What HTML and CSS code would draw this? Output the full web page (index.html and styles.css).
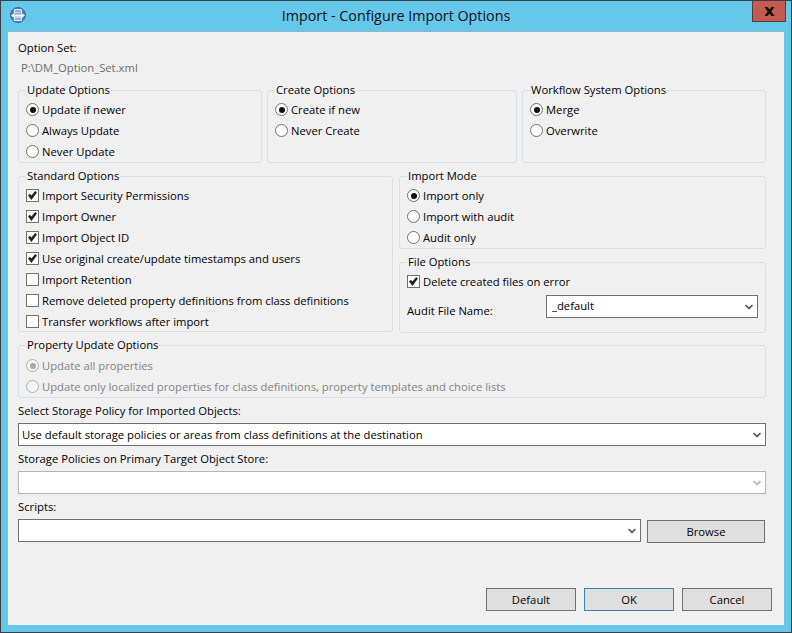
FILE: index.html
```html
<!DOCTYPE html>
<html lang="en">
<head>
<meta charset="utf-8">
<title>Import - Configure Import Options</title>
<link rel="stylesheet" href="styles.css">
</head>
<body>
<div class="window">
  <header class="titlebar">
    <svg class="app-icon" width="16" height="16" viewBox="0 0 16 16">
      <circle cx="8" cy="8" r="7.5" fill="#4d80bd" stroke="#3a6aa6"/>
      <path d="M4.5 2.5h7v3.5h-7zM4.5 10h7v3.5h-7z" fill="#8fb2da" stroke="#e6eef7"/>
      <path d="M1 8.5l3.5-2.5v1.5h7V6l3.5 2.5-3.5 2.5V9.5h-7V11z" fill="#fff"/>
    </svg>
    <h1 class="title">Import - Configure Import Options</h1>
    <button class="close"><svg width="11" height="9" viewBox="0 0 11 9"><path d="M.5 0h3l2 2.4 2-2.4h3L7.2 4.5 10.5 9h-3l-2-2.4-2 2.4h-3l3.3-4.5z" fill="#111"/></svg></button>
  </header>
  <main class="content">
    <div class="label">Option Set:</div>
    <div class="path">P:\DM_Option_Set.xml</div>

    <div class="row top">
      <fieldset class="group g-update">
        <legend>Update Options</legend>
        <label class="opt"><input type="radio" name="u" checked><span>Update if newer</span></label>
        <label class="opt"><input type="radio" name="u"><span>Always Update</span></label>
        <label class="opt"><input type="radio" name="u"><span>Never Update</span></label>
      </fieldset>
      <fieldset class="group g-create">
        <legend>Create Options</legend>
        <label class="opt"><input type="radio" name="c" checked><span>Create if new</span></label>
        <label class="opt"><input type="radio" name="c"><span>Never Create</span></label>
      </fieldset>
      <fieldset class="group g-workflow">
        <legend>Workflow System Options</legend>
        <label class="opt"><input type="radio" name="w" checked><span>Merge</span></label>
        <label class="opt"><input type="radio" name="w"><span>Overwrite</span></label>
      </fieldset>
    </div>

    <div class="row middle">
      <fieldset class="group g-standard">
        <legend>Standard Options</legend>
        <label class="opt"><input type="checkbox" checked><span>Import Security Permissions</span></label>
        <label class="opt"><input type="checkbox" checked><span>Import Owner</span></label>
        <label class="opt"><input type="checkbox" checked><span>Import Object ID</span></label>
        <label class="opt"><input type="checkbox" checked><span>Use original create/update timestamps and users</span></label>
        <label class="opt"><input type="checkbox"><span>Import Retention</span></label>
        <label class="opt"><input type="checkbox"><span>Remove deleted property definitions from class definitions</span></label>
        <label class="opt"><input type="checkbox"><span>Transfer workflows after import</span></label>
      </fieldset>
      <div class="side">
        <fieldset class="group g-mode">
          <legend>Import Mode</legend>
          <label class="opt"><input type="radio" name="m" checked><span>Import only</span></label>
          <label class="opt"><input type="radio" name="m"><span>Import with audit</span></label>
          <label class="opt"><input type="radio" name="m"><span>Audit only</span></label>
        </fieldset>
        <fieldset class="group g-file">
          <legend>File Options</legend>
          <label class="opt"><input type="checkbox" checked><span>Delete created files on error</span></label>
          <div class="audit">
            <span class="audit-label">Audit File Name:</span>
            <div class="combo audit-combo"><span>_default</span><svg class="chev" width="8" height="6" viewBox="0 0 9 7"><path d="M.5 1.2l4 4 4-4" fill="none" stroke="currentColor" stroke-width="2"/></svg></div>
          </div>
        </fieldset>
      </div>
    </div>

    <fieldset class="group g-property" disabled>
      <legend>Property Update Options</legend>
      <label class="opt off"><input type="radio" name="p" checked disabled><span>Update all properties</span></label>
      <label class="opt off"><input type="radio" name="p" disabled><span>Update only localized properties for class definitions, property templates and choice lists</span></label>
    </fieldset>

    <div class="label spaced">Select Storage Policy for Imported Objects:</div>
    <div class="combo wide"><span>Use default storage policies or areas from class definitions at the destination</span><svg class="chev" width="8" height="6" viewBox="0 0 9 7"><path d="M.5 1.2l4 4 4-4" fill="none" stroke="currentColor" stroke-width="2"/></svg></div>

    <div class="label spaced">Storage Policies on Primary Target Object Store:</div>
    <div class="combo wide disabled"><span></span><svg class="chev" width="8" height="6" viewBox="0 0 9 7"><path d="M.5 1.2l4 4 4-4" fill="none" stroke="currentColor" stroke-width="2"/></svg></div>

    <div class="label spaced">Scripts:</div>
    <div class="script-row">
      <div class="combo script-combo"><span></span><svg class="chev" width="8" height="6" viewBox="0 0 9 7"><path d="M.5 1.2l4 4 4-4" fill="none" stroke="currentColor" stroke-width="2"/></svg></div>
      <button class="btn browse">Browse</button>
    </div>

    <div class="actions">
      <button class="btn action">Default</button>
      <button class="btn action primary">OK</button>
      <button class="btn action">Cancel</button>
    </div>
  </main>
</div>
</body>
</html>
```
FILE: styles.css
```css
* { box-sizing: border-box; }
html, body { margin: 0; padding: 0; }
body {
  width: 792px;
  height: 633px;
  overflow: hidden;
  font-family: "Open Sans", "Noto Sans", sans-serif;
  font-size: 11.25px;
  color: #000;
}
.window {
  width: 792px;
  height: 633px;
  background: #65c8eb;
  border: 1px solid #3b4044;
  padding: 0 7px 7px 7px;
  display: flex;
  flex-direction: column;
}
.titlebar {
  height: 30px;
  flex: none;
  position: relative;
  display: flex;
  justify-content: center;
  align-items: center;
}
.app-icon { position: absolute; left: 2px; top: 6px; }
.title {
  margin: 0 0 2px;
  font-size: 14.3px;
  font-weight: 400;
  color: #111;
}
.close {
  position: absolute;
  right: -2px;
  top: 0;
  width: 34px;
  height: 21px;
  padding: 0;
  background: #c45a50;
  border: 1px solid #5e3a34;
  border-top: 0;
  display: flex;
  align-items: center;
  justify-content: center;
}
.content {
  flex: 1;
  background: #f0f0f0;
  border-top: 1px solid #8fb4c8;
  padding: 8px 0 0 10px;
  display: flex;
  flex-direction: column;
  align-items: flex-start;
}
.label { height: 16px; line-height: 16px; white-space: nowrap; }
.spaced { margin-top: 5px; }
.path { height: 16px; line-height: 16px; margin: 4px 0 0 3px; color: #6d6d6d; }
.row { display: flex; }
.top { margin-top: 6px; }
.group {
  margin: 0;
  padding: 1px 0 0 7px;
  border: 1px solid #d5dfe5;
  border-radius: 3px;
  min-width: 0;
}
.group legend {
  padding: 0 1px;
  height: 16px;
  line-height: 16px;
  white-space: nowrap;
}
.g-update { width: 244px; height: 81px; }
.g-create { width: 250px; height: 81px; margin-left: 5px; }
.g-workflow { width: 244px; height: 81px; margin-left: 5px; }
.middle { margin-top: 5px; }
.g-standard { width: 375px; height: 164px; }
.side { margin-left: 6px; width: 367px; display: flex; flex-direction: column; }
.g-mode { height: 81px; }
.g-file { height: 79px; margin-top: 5px; }
.g-property { width: 748px; height: 61px; margin-top: 4px; padding-top: 2px; }
.opt { display: flex; align-items: center; height: 21px; white-space: nowrap; }
.off { color: #838383; }
.opt input {
  appearance: none;
  margin: 0 3px 0 0;
  width: 13px;
  height: 13px;
  background: #fff;
  border: 1px solid #707070;
  flex: none;
  position: relative;
}
.opt input[type="radio"] { border-radius: 50%; }
.opt input[type="radio"]:checked::after {
  content: "";
  position: absolute;
  left: 2.5px;
  top: 2.5px;
  width: 6px;
  height: 6px;
  border-radius: 50%;
  background: #111;
}
.opt input[type="checkbox"]:checked::after {
  content: "";
  position: absolute;
  left: 1px;
  top: 1px;
  width: 9px;
  height: 9px;
  background: #222;
  clip-path: polygon(0 50%, 20% 30%, 38% 50%, 80% 0, 100% 18%, 38% 100%);
}
.opt.off input { border-color: #b0b0b0; background: #f4f4f4; }
.opt.off input:checked::after { background: #a8a8a8; }
.combo {
  width: 748px;
  height: 23px;
  background: #fff;
  border: 1px solid #707070;
  display: flex;
  align-items: center;
  justify-content: space-between;
  padding: 0 4px 0 3px;
  white-space: nowrap;
  color: #000;
}
.wide { margin-top: 4px; }
.chev { color: #606060; flex: none; }
.combo.disabled { border-color: #b5b5b5; }
.combo.disabled .chev { color: #b5b5b5; }
.audit { display: flex; margin-top: 3px; }
.audit-label { width: 139px; flex: none; padding-top: 8px; }
.audit-combo { width: 212px; padding-left: 5px; }
.audit-combo span { padding-bottom: 2px; }
.script-row { display: flex; align-items: flex-start; margin-top: 4px; }
.script-combo { width: 623px; }
.btn {
  font: inherit;
  color: #000;
  background: #dfdfdf;
  border: 1px solid #707070;
  padding: 0;
  height: 23px;
}
.browse { width: 118px; margin: 1px 0 0 6px; }
.actions {
  display: flex;
  gap: 8px;
  margin-top: 45px;
  margin-left: 468px;
}
.action { width: 90px; }
.primary { border-color: #3c7fb1; }
```
